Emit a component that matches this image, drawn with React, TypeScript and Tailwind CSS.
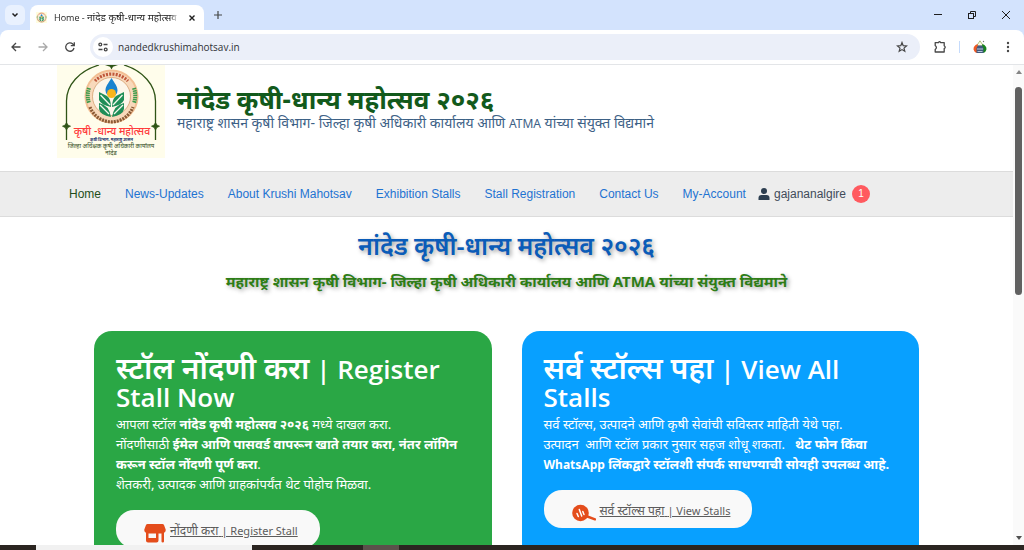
import { useState } from "react";
import type { ReactNode } from "react";

const navLinks = [
  "Home",
  "News-Updates",
  "About Krushi Mahotsav",
  "Exhibition Stalls",
  "Stall Registration",
  "Contact Us",
  "My-Account",
];

function EmblemRing() {
  return (
    <g>
      <circle cx="54.500" cy="31.500" r="27" fill="#f3bf94" />
      <circle cx="54.500" cy="31.500" r="25" fill="#f8d9bb" />
      <circle cx="54.500" cy="31.500" r="19" fill="#fdf6ea" stroke="#c98a52" strokeWidth="0.6" />
      <path d="M33 42A23 23 0 0 0 76 42" fill="none" stroke="#8a5a35" strokeWidth="3.200" strokeDasharray="2 1" />
      <path d="M38 16A23 23 0 0 1 71 16" fill="none" stroke="#c0583a" strokeWidth="3.200" strokeDasharray="2 1.200" />
      <path d="M32 23Q29.500 31 32 38M77 23Q79.500 31 77 38" fill="none" stroke="#3c9b4a" strokeWidth="4" strokeDasharray="1.500 .7" />
      <path d="M54.500 13C58 19 60.500 21 60.500 25.500A6 6 0 0 1 48.500 25.500C48.500 21 51 19 54.500 13Z" fill="#1a83cf" />
      <path d="M42 27L50 31Q54 34 54 42Q44 40 42 35ZM67 27L59 31Q55 34 55 42Q65 40 67 35ZM42 38Q52 40 54 52Q43 50 42 44ZM67 38Q57 40 55 52Q66 50 67 44Z" fill="#1f8d57" />
      <circle cx="54.500" cy="28.500" r="4.500" fill="#f7b51c" />
      <path d="M43.500 30L53 40M65.500 30L56 40M43 40L52 49M66 40L57 49" stroke="#f1f8ec" strokeWidth="1.300" />
    </g>
  );
}

function SiteLogo() {
  return (
    <svg viewBox="0 0 108 93" className="h-[93px] w-[108px] shrink-0" role="img" aria-label="कृषी धान्य महोत्सव">
      <rect width="108" height="93" fill="#fffdeb" />
      <path d="M9.500 75V36C9.500 20 22 6 42 0M98.500 75V36C98.500 20 86 6 67 0" fill="none" stroke="#2f5416" strokeWidth="1.300" />
      <path d="M9.500 57.500L10.800 60L13.500 61.200L10.800 62.500L9.500 65L8.200 62.500L5.500 61.200L8.200 60ZM98.500 57.500L99.800 60L102.500 61.200L99.800 62.500L98.500 65L97.200 62.500L94.500 61.200L97.200 60Z" fill="#2f5416" stroke="#2f5416" strokeWidth=".8" />
      <path d="M48 0H61L56 1.800L54.500 4.500L53 1.800Z" fill="#2f5416" />
      <EmblemRing />
      <g textAnchor="middle" fontFamily="'Noto Sans', 'Noto Sans Devanagari', sans-serif">
        <text x="55" y="70" fontSize="10.500" fontWeight="500" fill="#ff3b3b">कृषी -धान्य महोत्सव</text>
        <text x="54.500" y="76" fontSize="4" fontWeight="700" fill="#16306b">कृषी विभाग- महाराष्ट्र शासन</text>
        <text x="54" y="83" fontSize="6" fill="#2f4a20">जिल्हा अधिक्षक कृषी अधिकारी कार्यालय</text>
        <text x="54" y="90" fontSize="6" fill="#2f4a20">नांदेड</text>
      </g>
    </svg>
  );
}

function TabStrip() {
  return (
    <div className="flex h-[30px] shrink-0 items-center bg-[#d3e3fd] text-[#1f1f1f]">
      <button aria-label="Search tabs" className="ml-[5px] flex h-5 w-5 items-center justify-center rounded-md bg-[#e9f1fe]">
        <svg viewBox="0 0 8 6" className="h-[6px] w-2" fill="none" stroke="currentColor" strokeWidth="1.500"><path d="M1.500 1.500L4 4L6.500 1.500" /></svg>
      </button>
      <div className="ml-[5px] flex h-[25px] w-[174px] items-center self-end rounded-t-lg bg-white pr-[6px] pl-[6px] font-['Open_Sans','Noto_Sans','Noto_Sans_Devanagari',sans-serif]">
        <svg viewBox="24 2 60 60" className="h-[11px] w-[11px] shrink-0"><rect x="24" y="2" width="60" height="60" fill="#fffde0" /><EmblemRing /></svg>
        <span className="ml-[7px] min-w-0 flex-1 overflow-hidden text-[10px] leading-4 whitespace-nowrap [mask-image:linear-gradient(to_right,black_94%,transparent)]">
          <span className="text-[9px]">Home - </span>नांदेड कृषी-धान्य महोत्सव
        </span>
        <button aria-label="Close tab" className="ml-2 flex h-4 w-3 items-center justify-center">
          <svg viewBox="0 0 8 8" className="h-2 w-2" fill="none" stroke="currentColor" strokeWidth="1.400"><path d="M1.500 1.500L6.500 6.500M6.500 1.500L1.500 6.500" /></svg>
        </button>
      </div>
      <button aria-label="New tab" className="ml-1 flex h-5 w-5 items-center justify-center">
        <svg viewBox="0 0 10 10" className="h-[10px] w-[10px]" fill="none" stroke="#444746" strokeWidth="1.200"><path d="M5 1V9M1 5H9" /></svg>
      </button>
      <div className="ml-auto flex items-center gap-[10px] pr-[6px]">
        <button aria-label="Minimize" className="flex h-6 w-6 items-center justify-center">
          <svg viewBox="0 0 10 10" className="h-[10px] w-[10px]" stroke="currentColor"><path d="M1 4.500H9" /></svg>
        </button>
        <button aria-label="Restore" className="flex h-6 w-6 items-center justify-center">
          <svg viewBox="0 0 10 10" className="h-[10px] w-[10px]" fill="none" stroke="currentColor"><rect x="1.500" y="3.500" width="5" height="5" /><path d="M3.500 3.500V1.500H8.500V6.500H6.500" /></svg>
        </button>
        <button aria-label="Close" className="flex h-6 w-6 items-center justify-center">
          <svg viewBox="0 0 10 10" className="h-[10px] w-[10px]" fill="none" stroke="currentColor"><path d="M1 1L9 9M9 1L1 9" /></svg>
        </button>
      </div>
    </div>
  );
}

function Toolbar() {
  const [address, setAddress] = useState("nandedkrushimahotsav.in");
  return (
    <div className="shrink-0 bg-[#d3e3fd]">
      <div className="flex h-[35px] items-center rounded-t-lg border-b border-[#e3e5e8] bg-white pr-[14px] pl-[10px] text-[#474747]">
        <button aria-label="Back" className="flex h-5 w-3 items-center justify-center">
          <svg viewBox="0 0 12 12" className="h-3 w-3 shrink-0" fill="none" stroke="currentColor" strokeWidth="1.300"><path d="M10.500 6H2M6 2L2 6L6 10" /></svg>
        </button>
        <button aria-label="Forward" className="ml-[15px] flex h-5 w-3 items-center justify-center text-[#a9a9a9]">
          <svg viewBox="0 0 12 12" className="h-3 w-3 shrink-0" fill="none" stroke="currentColor" strokeWidth="1.300"><path d="M1.500 6H10M6 2L10 6L6 10" /></svg>
        </button>
        <button aria-label="Reload" className="ml-[15px] flex h-5 w-3 items-center justify-center">
          <svg viewBox="0 0 12 12" className="h-3 w-3 shrink-0" fill="none" stroke="currentColor" strokeWidth="1.300"><path d="M10 7A4.200 4.200 0 1 1 8.800 3L10 4.200" /><path d="M10.300 1.200V4.700H6.800" /></svg>
        </button>
        <div className="ml-[14px] flex h-[26px] min-w-0 flex-1 items-center rounded-full bg-[#ebeff9] pr-3 pl-[3px]">
          <button aria-label="View site information" className="flex h-5 w-5 shrink-0 items-center justify-center rounded-full bg-white">
            <svg viewBox="0 0 12 12" className="h-3 w-3" fill="none" stroke="currentColor" strokeWidth="1.300"><circle cx="3.300" cy="3.500" r="1.400" /><path d="M6.500 3.500H10.500M1.500 8.500H5.500" /><circle cx="8.700" cy="8.500" r="1.400" /></svg>
          </button>
          <input
            aria-label="Address"
            value={address}
            onChange={(e) => setAddress(e.target.value)}
            className="ml-[5px] min-w-0 flex-1 bg-transparent font-['Open_Sans','Noto_Sans',sans-serif] text-[10px] leading-4 text-[#303236] outline-none"
          />
          <button aria-label="Bookmark this tab" className="flex h-4 w-3 items-center justify-center">
            <svg viewBox="0 0 12 12" className="h-3 w-3 shrink-0" fill="none" stroke="currentColor" strokeWidth="1.200"><path d="M6 1.500L7.200 4.700L10.500 5L8 7.100L8.800 10.300L6 8.600L3.200 10.300L4 7.100L1.500 5L4.800 4.700Z" /></svg>
          </button>
        </div>
        <button aria-label="Extensions" className="ml-[13px] flex h-5 w-[14px] items-center justify-center">
          <svg viewBox="0 0 14 14" className="h-[14px] w-[14px]" fill="none" stroke="currentColor" strokeWidth="1.300"><path d="M2.200 2.600H5.500Q6.500 .8 7.700 2.600H11.200V5.800Q13.200 7.200 11.200 8.600V12H2.200V9.500Q4.600 7.400 2.200 5.400Z" strokeLinejoin="round" /></svg>
        </button>
        <span className="ml-3 h-3 w-px bg-[#c5dbfc]" />
        <button aria-label="Profile" className="ml-[13px] flex h-5 w-[14px] items-center justify-center">
          <svg viewBox="0 0 14 14" className="h-[14px] w-[14px]">
            <path d="M7 .8L10.500 6H3.500Z" fill="#fbfbe8" stroke="#9db35c" strokeWidth=".8" />
            <path d="M4.500 4Q0 6 .6 9.500Q1.500 13 5 13L5.500 8Z" fill="#ee5a24" />
            <path d="M9.500 4Q14 6 13.400 9.500Q12.500 13 9 13L8.500 8Z" fill="#17831d" />
            <path d="M5 5.500H9L10.500 8V13H3.500V8Z" fill="#41597f" />
            <path d="M4 9H10M4.500 11.500H9.500" stroke="#d6e3ee" strokeWidth=".8" />
            <circle cx="10.500" cy="1.500" r=".7" fill="#777" />
          </svg>
        </button>
        <button aria-label="Browser menu" className="ml-[18px] flex h-5 w-[5px] items-center justify-center">
          <svg viewBox="0 0 4 12" className="h-3 w-1" fill="currentColor"><circle cx="2" cy="2" r="1.200" /><circle cx="2" cy="6" r="1.200" /><circle cx="2" cy="10" r="1.200" /></svg>
        </button>
      </div>
    </div>
  );
}

function ScrollBar() {
  return (
    <div className="flex w-[11px] shrink-0 flex-col items-center bg-[#fafafa] py-[5px]" aria-hidden="true">
      <svg viewBox="0 0 8 5" className="h-[5px] w-2 shrink-0" fill="#858585"><path d="M4 0L7 4H1Z" /></svg>
      <div className="mt-3 h-[208px] w-[7px] shrink-0 rounded-full bg-[#616161]" />
      <svg viewBox="0 0 8 5" className="mt-auto h-[5px] w-2 shrink-0" fill="#505050"><path d="M4 5L7 1H1Z" /></svg>
    </div>
  );
}

function StoreIcon() {
  return (
    <svg viewBox="0 0 22 20" className="h-5 w-[22px] shrink-0" fill="#e44d1c">
      <path d="M3.500 1H18.500Q19.500 1 20 2L21.700 6.500Q22 9.800 18.500 10Q16.500 10 15 8.800Q13 10 11 10Q9 10 7 8.800Q5.500 10 3.500 10Q0 9.800 .3 6.500L2 2Q2.500 1 3.500 1Z" />
      <path fillRule="evenodd" d="M2 8H20V18.500Q20 19.500 18.800 19.500Q17.500 19.500 17.500 18.500V10.500H14.500V17.500Q14.500 19.500 12.500 19.500H4Q2 19.500 2 17.500ZM4.500 10.500V15H12V10.500Z" />
    </svg>
  );
}

function SearchChartIcon() {
  return (
    <svg viewBox="0 0 24 18" className="h-[18px] w-6 shrink-0">
      <circle cx="8.500" cy="9" r="8.300" fill="#e44d1c" />
      <path d="M14 12L23 15.300" stroke="#e44d1c" strokeWidth="2.400" strokeLinecap="round" />
      <path d="M5 9.500L6.300 12.500M7.300 5.500L9.700 12M10.800 7.500L12 10.500" stroke="#fff" strokeWidth="1.500" strokeLinecap="round" />
    </svg>
  );
}

type StallCardProps = {
  tone: string;
  title: string;
  latinTitle: ReactNode;
  children: ReactNode;
  icon: ReactNode;
  action: string;
  latinAction: string;
};

function StallCard({ tone, title, latinTitle, children, icon, action, latinAction }: StallCardProps) {
  return (
    <section className={`flex min-w-0 flex-1 flex-col items-start rounded-[18px] px-[22px] pt-[23px] pb-[22px] text-white ${tone}`}>
      <h3 className="text-[30px] leading-7 font-semibold">
        {title}<span className="font-['Open_Sans','Noto_Sans',sans-serif] text-[26px] leading-5"> {latinTitle}</span>
      </h3>
      <p className="mt-1 text-[13px] leading-5">{children}</p>
      <a href="#stalls" className="mt-4 flex h-[38px] items-center gap-1 rounded-[18px] bg-[#f9f9f9] pt-1 pr-[22px] pl-7 text-[12px] text-[#5c5c5c]">
        <span className="pt-1">{icon}</span>
        <span className="leading-5 underline">{action} <span className="text-[11px] leading-4">{latinAction}</span></span>
      </a>
    </section>
  );
}

export default function App() {
  return (
    <div className="flex h-screen flex-col overflow-hidden bg-white font-['Noto_Sans','Noto_Sans_Devanagari',sans-serif]">
      <TabStrip />
      <Toolbar />
      <div className="flex min-h-0 flex-1">
        <main className="min-w-0 flex-1 overflow-hidden">
          <header className="mx-auto flex h-[106px] max-w-[899px] gap-3">
            <SiteLogo />
            <div className="pt-[18px]">
              <h1 className="text-[26px] leading-8 font-bold text-[#125a1c]">नांदेड कृषी-धान्य महोत्सव २०२६</h1>
              <p className="text-[14px] leading-4 text-[#3d6186]">महाराष्ट्र शासन कृषी विभाग- जिल्हा कृषी अधिकारी कार्यालय आणि <span className="text-[12px]">ATMA</span> यांच्या संयुक्त विद्यमाने</p>
            </div>
          </header>
          <nav className="border-y border-[#dcdcdc] bg-[#ededed] font-['Liberation_Sans',sans-serif] text-[12px] leading-4">
            <ul className="mx-auto flex h-11 max-w-[899px] items-center whitespace-nowrap">
              {navLinks.map((label, i) => (
                <li key={label}>
                  <a href="#top" className={i === 0 ? "px-3 text-[#1f4d1a]" : "px-3 text-[#1e73d2]"}>{label}</a>
                </li>
              ))}
              <li>
                <a href="#profile" className="flex items-center text-[#414b5a]">
                  <svg viewBox="0 0 12 12" className="h-3 w-3" fill="#2c3e50"><circle cx="6" cy="3" r="3" /><path d="M.5 12V10Q.5 7 3.500 7H8.500Q11.500 7 11.500 10V12Z" /></svg>
                  <span className="ml-1">gajananalgire</span>
                  <span className="ml-[6px] flex h-[18px] w-[18px] items-center justify-center rounded-full bg-[#ff5a5f] text-[10px] text-white">1</span>
                </a>
              </li>
            </ul>
          </nav>
          <div className="pt-3 text-center [text-shadow:2px_2px_4px_rgba(0,0,0,0.35)]">
            <h2 className="text-[25px] leading-8 font-semibold text-[#0b5cb8]">नांदेड कृषी-धान्य महोत्सव २०२६</h2>
            <p className="mt-2 text-[15px] leading-6 font-bold text-[#2e7d16]">महाराष्ट्र शासन कृषी विभाग- जिल्हा कृषी अधिकारी कार्यालय आणि ATMA यांच्या संयुक्त विद्यमाने</p>
          </div>
          <div className="mx-auto mt-[38px] flex max-w-[825px] gap-[30px]">
            <StallCard
              tone="bg-[#2aa745]"
              title="स्टॉल नोंदणी करा"
              latinTitle={<>| Register<br />Stall Now</>}
              icon={<StoreIcon />}
              action="नोंदणी करा"
              latinAction="| Register Stall"
            >
              आपला स्टॉल <strong>नांदेड कृषी महोत्सव २०२६</strong> मध्ये दाखल करा.<br />
              नोंदणीसाठी <strong>ईमेल आणि पासवर्ड वापरून खाते तयार करा, नंतर लॉगिन<br />करून स्टॉल नोंदणी पूर्ण करा</strong>.<br />
              शेतकरी, उत्पादक आणि ग्राहकांपर्यंत थेट पोहोच मिळवा.
            </StallCard>
            <StallCard
              tone="bg-[#08a0ff]"
              title="सर्व स्टॉल्स पहा"
              latinTitle={<>| View All<br />Stalls</>}
              icon={<SearchChartIcon />}
              action="सर्व स्टॉल्स पहा"
              latinAction="| View Stalls"
            >
              सर्व स्टॉल्स, उत्पादने आणि कृषी सेवांची सविस्तर माहिती येथे पहा.<br />
              उत्पादन&nbsp; आणि स्टॉल प्रकार नुसार सहज शोधू शकता. &nbsp; <strong>थेट फोन किंवा<br /><span className="text-[12px] leading-4">WhatsApp</span> लिंकद्वारे स्टॉलशी संपर्क साधण्याची सोयही उपलब्ध आहे.</strong>
            </StallCard>
          </div>
        </main>
        <ScrollBar />
      </div>
      <div className="flex h-[5px] shrink-0 bg-[#2b2521]">
        <div className="ml-9 w-[216px] bg-[#f1f1f1]" />
        <div className="ml-[111px] w-9 bg-[#5b514b]" />
      </div>
    </div>
  );
}
